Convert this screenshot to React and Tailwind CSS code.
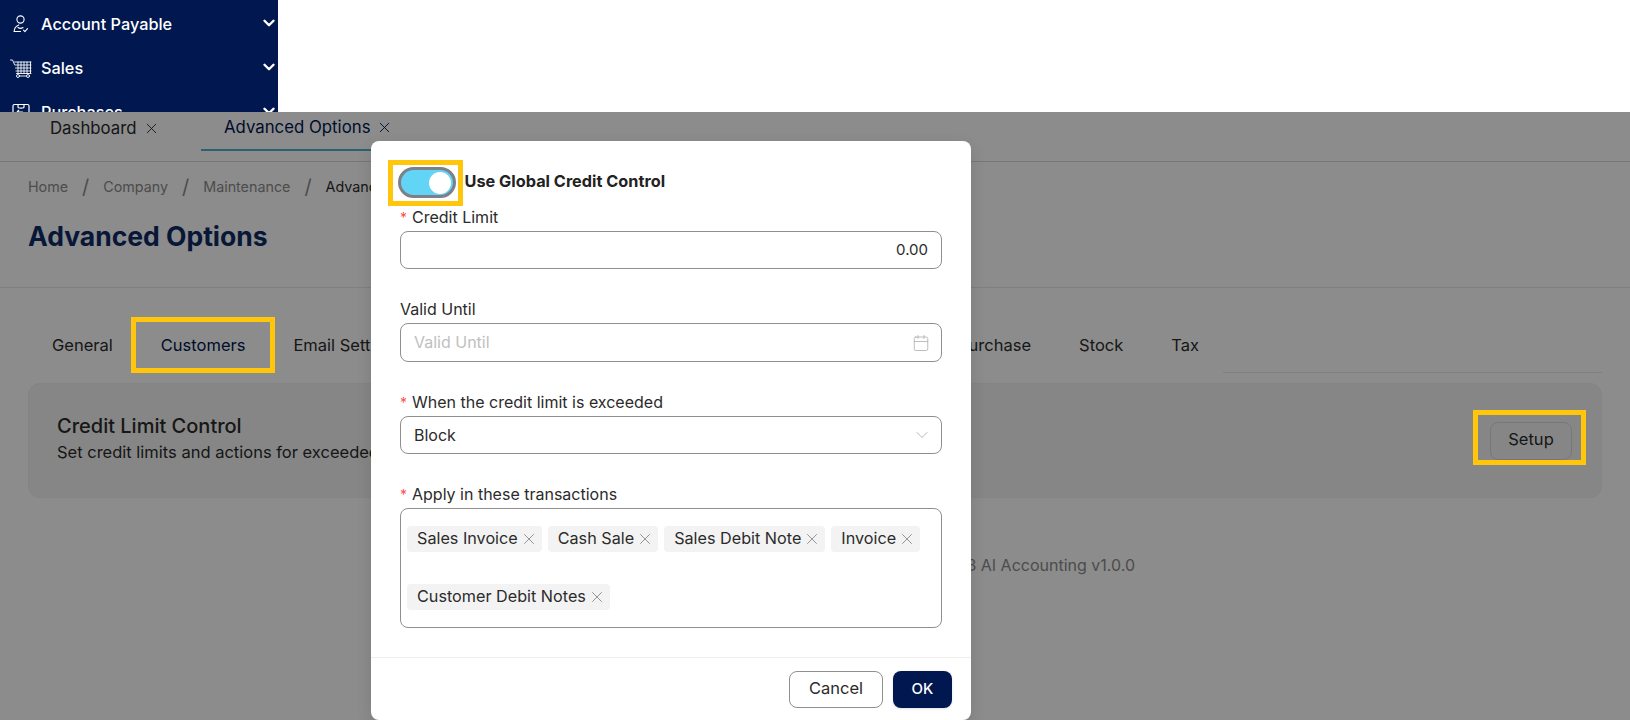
import { X, Calendar, ChevronDown } from 'lucide-react'

const font = { fontFamily: 'Inter, "Noto Sans", sans-serif' }

function PayableIcon() {
  return (
    <svg width="16" height="18" viewBox="0 0 16 18" fill="none" stroke="white" strokeWidth="1.1" strokeLinecap="round" strokeLinejoin="round">
      <circle cx="7.5" cy="4.5" r="3.6" />
      <path d="M1 16.5h6.500M1.200 16.500c0-3.400 2-5.600 4.600-6.600" />
      <path d="M5 12.500c1.500 1 3.500 1 5 0" />
      <path d="M10.500 15.200l1.400 1.400 2.600-3" />
    </svg>
  )
}

function CartIcon() {
  return (
    <svg width="22" height="19" viewBox="0 0 22 19" fill="none" stroke="white" strokeWidth="0.9" strokeLinecap="round">
      <path d="M0.500 1h2l2 4.500" />
      <path d="M4.500 3h16.500M5 6h16M5.500 9h15.500M6 12h15M6.500 14.500h14.500" />
      <path d="M8 3v11.500M11 3v11.500M14 3v11.500M17 3v11.500M20.500 3v11.500" />
      <circle cx="8" cy="17" r="1.500" />
      <circle cx="18" cy="17" r="1.500" />
      <path d="M9.500 17h7" />
    </svg>
  )
}

function PurchaseIcon() {
  return (
    <svg width="18" height="18" viewBox="0 0 18 18" fill="none" stroke="white" strokeWidth="1.200" strokeLinejoin="round">
      <rect x="1" y="1.500" width="16" height="15" rx="1.500" />
      <path d="M6 1.500v2.500c0 1.500 6 1.500 6 0V1.500" />
      <path d="M5 9h6M5 9l2-2" />
    </svg>
  )
}

function NavItem({ icon, label }) {
  return (
    <div className="flex h-[44px] shrink-0 items-center justify-between">
      <div className="flex items-center">
        <span className="flex w-[41px] justify-center">{icon}</span>
        <span className="text-[16.300px] font-medium text-white">{label}</span>
      </div>
      <ChevronDown size={18} strokeWidth={3.200} className="-mt-[3px] text-white" />
    </div>
  )
}

function Field({ label, required, className, children }) {
  return (
    <div className={className}>
      <div className="mb-[2px] flex h-[22px] items-center pb-[2px] text-[16px] text-[#2b2b2b]">
        {required && <span className="mr-[5px] text-[14px] text-[#ff4d4f]">*</span>}
        {label}
      </div>
      {children}
    </div>
  )
}

function Tag({ label }) {
  return (
    <div className="flex h-[26px] items-center gap-[2px] rounded bg-[#f3f3f3] pr-[4px] pl-[10px] text-[16.200px] text-[#2b2b2b]">
      <span className="pb-[1px]">{label}</span>
      <X size={18} strokeWidth={1} className="text-[#777]" />
    </div>
  )
}

export default function App() {
  return (
    <div className="flex h-[720px] flex-col overflow-hidden bg-white" style={font}>
      <div className="flex h-[112px] shrink-0">
        <div className="flex h-[112px] w-[278px] flex-col overflow-hidden bg-[#00174f] pt-[2px]">
          <NavItem icon={<PayableIcon />} label="Account Payable" />
          <NavItem icon={<CartIcon />} label="Sales" />
          <NavItem icon={<PurchaseIcon />} label="Purchases" />
        </div>
      </div>

      <div className="relative flex-1 overflow-hidden">
        {/* page behind the dialog */}
        <div className="flex h-[50px] border-b border-[#d9d9d9] text-[16.800px]">
          <div className="flex h-[39px] w-[201px] items-center pb-[6px] pl-[50px] text-[#2b2b2b]">
            Dashboard
            <X size={17} strokeWidth={1.300} className="ml-[6px]" />
          </div>
          <div className="flex h-[39px] w-[220px] items-center border-b-2 border-[#4fb3cf] pb-[6px] pl-[23px] text-[#00174f]">
            Advanced Options
            <X size={17} strokeWidth={1.300} className="ml-[6px] shrink-0" />
          </div>
        </div>

        <div className="h-[126px] border-b border-[#e8e8e8] px-[28px]">
          <div className="flex h-[50px] items-center pb-[1px] text-[14.300px] text-[#8c8c8c]">
            <span>Home</span>
            <span className="mx-[14px] text-[20px]">/</span>
            <span>Company</span>
            <span className="mx-[14px] text-[20px]">/</span>
            <span>Maintenance</span>
            <span className="mx-[14px] text-[20px]">/</span>
            <span className="text-[#2b2b2b]">Advanced Options</span>
          </div>
          <div className="text-[26.500px] leading-[48px] font-bold text-[#0e2a66]">Advanced Options</div>
        </div>

        <div className="mx-[28px] mt-[31px] flex h-[54px] text-[16.500px] text-[#2b2b2b]">
          <div className="flex w-[1195px] items-start pt-[14px]">
            <span className="px-[24px]">General</span>
            <span className="px-[24px] text-[#00174f]">Customers</span>
            <span className="px-[24px]">Email Settings</span>
            <div className="flex-1" />
            <span className="px-[24px]">Purchase</span>
            <span className="px-[24px]">Stock</span>
            <span className="px-[24px]">Tax</span>
          </div>
          <div className="flex-1 border-b border-[#e8e8e8]" />
        </div>

        <div className="mx-[28px] mt-[10px] flex h-[115px] items-center justify-between rounded-xl border border-[#f0f0f0] bg-[#f5f5f5] pr-[29px] pl-[28px]">
          <div className="pb-[5px]">
            <div className="text-[20px] leading-[28px] font-medium text-[#2b2b2b]">Credit Limit Control</div>
            <div className="text-[16.500px] leading-[24px] text-[#2b2b2b]">Set credit limits and actions for exceeded amounts</div>
          </div>
          <button className="h-[38px] w-[82px] rounded-lg border border-[#d9d9d9] pb-[2px] text-[16.500px] text-[#2b2b2b]">Setup</button>
        </div>

        <div className="mt-[55px] w-[1135px] text-right text-[16px] text-[#8c8c8c]">©2023 AI Accounting v1.0.0</div>

        {/* dim layer */}
        <div className="absolute inset-0 bg-black/45" />

        {/* highlight boxes */}
        <div className="absolute top-[205px] left-[131px] h-[56px] w-[144px] border-[5px] border-[#ffc60b]" />
        <div className="absolute top-[298px] left-[1473px] h-[55px] w-[113px] border-[5px] border-[#ffc60b]" />

        {/* dialog */}
        <div className="absolute top-[29px] left-[371px] flex h-[579px] w-[600px] flex-col rounded-lg bg-white shadow-[0_6px_16px_rgba(0,0,0,0.12)]">
          <div className="flex-1 px-[29px] pt-[26px]">
            <div className="relative mb-[9px] flex h-[31px] items-center">
              <div className="absolute top-[-7px] left-[-12px] h-[46px] w-[75px] border-[5px] border-[#ffc60b]" />
              <div className="-ml-[2.500px] flex h-[31px] w-[58px] items-center justify-end rounded-full border-[3px] border-[#7f7f88] bg-[#62d4f5] pr-[2px]">
                <div className="h-[22px] w-[22px] rounded-full bg-white" />
              </div>
              <span className="ml-[9px] pb-[3px] text-[16.300px] font-bold text-[#222]">Use Global Credit Control</span>
            </div>

            <Field label="Credit Limit" required className="mb-[30px]">
              <div className="flex h-[38px] items-center justify-end rounded-lg border border-[#8f8f8f] px-[13px] text-[15px] text-[#2b2b2b]">0.00</div>
            </Field>

            <Field label="Valid Until" className="mb-[30px]">
              <div className="flex h-[39px] items-center justify-between rounded-lg border border-[#8f8f8f] pr-[11px] pl-[13px] text-[16px] text-[#bfbfbf]">
                <span className="pb-[2px]">Valid Until</span>
                <Calendar size={18} strokeWidth={1} className="text-[#a8a8a8]" />
              </div>
            </Field>

            <Field label="When the credit limit is exceeded" required className="mb-[30px]">
              <div className="flex h-[38px] items-center justify-between rounded-lg border border-[#8f8f8f] pr-[9px] pl-[13px] text-[16px] text-[#2b2b2b]">
                <span className="pb-[1px]">Block</span>
                <ChevronDown size={20} strokeWidth={1} className="text-[#a8a8a8]" />
              </div>
            </Field>

            <div className="mb-[2px] flex h-[22px] items-center pb-[2px] text-[16px] text-[#2b2b2b]">
              <span className="mr-[5px] text-[14px] text-[#ff4d4f]">*</span>
              Apply in these transactions
            </div>
            <div className="flex h-[120px] flex-wrap content-start gap-x-[6px] gap-y-[32px] rounded-lg border border-[#8f8f8f] pt-[17px] pl-[6px]">
              <Tag label="Sales Invoice" />
              <Tag label="Cash Sale" />
              <Tag label="Sales Debit Note" />
              <Tag label="Invoice" />
              <Tag label="Customer Debit Notes" />
            </div>
          </div>

          <div className="flex h-[63px] items-center justify-end gap-[10px] border-t border-[#eeeeee] pr-[19px]">
            <button className="h-[37px] w-[94px] rounded-lg border border-[#8f8f8f] pb-[1px] text-[16.500px] text-[#2b2b2b]">Cancel</button>
            <button className="h-[37px] w-[59px] rounded-lg bg-[#00174f] text-[15px] font-medium text-white shadow-sm">OK</button>
          </div>
        </div>
      </div>
    </div>
  )
}
